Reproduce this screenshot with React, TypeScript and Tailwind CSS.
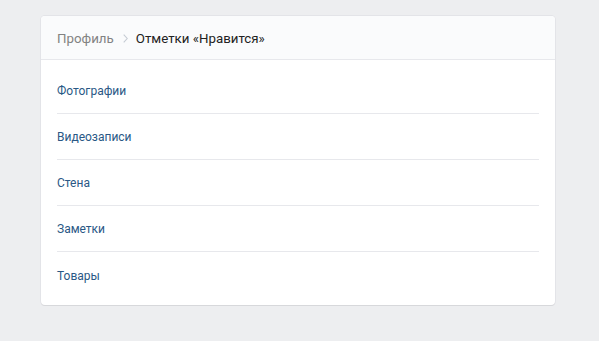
import React from 'react';

const ITEMS = ['Фотографии', 'Видеозаписи', 'Стена', 'Заметки', 'Товары'];

const App: React.FC = () => {
  return (
    <div className="min-h-[341px] bg-[#edeef0] pt-4 pl-[41px] font-['Roboto','Liberation_Sans',sans-serif]">
      <div className="w-[514px] bg-white rounded-[4px] shadow-[0_1px_0_0_#d7d8db,0_0_0_1px_#e3e4e8] overflow-hidden">
        <div className="h-[44px] flex items-center px-4 pt-[2px] bg-[#fafbfc] border-b border-[#e7e8ec] text-[13.3px]">
          <span className="text-[#828282]">Профиль</span>
          <svg className="ml-[9px] mr-[8px]" width="5" height="9" viewBox="0 0 5 9" fill="none">
            <path d="M0.7 0.7L4.2 4.5L0.7 8.3" stroke="#c5cbd3" strokeWidth="1.1" />
          </svg>
          <span className="text-[#222]">Отметки «Нравится»</span>
        </div>
        <ul className="pt-2 pb-[7px]">
          {ITEMS.map((item, index) => (
            <li
              key={index}
              className={`mx-4 h-[46px] flex items-center pt-[1px] text-[12px] text-[#2a5885] ${
                index < ITEMS.length - 1 ? 'border-b border-[#e7e8ec]' : ''
              }`}
            >
              {item}
            </li>
          ))}
        </ul>
      </div>
    </div>
  );
};

export default App;
